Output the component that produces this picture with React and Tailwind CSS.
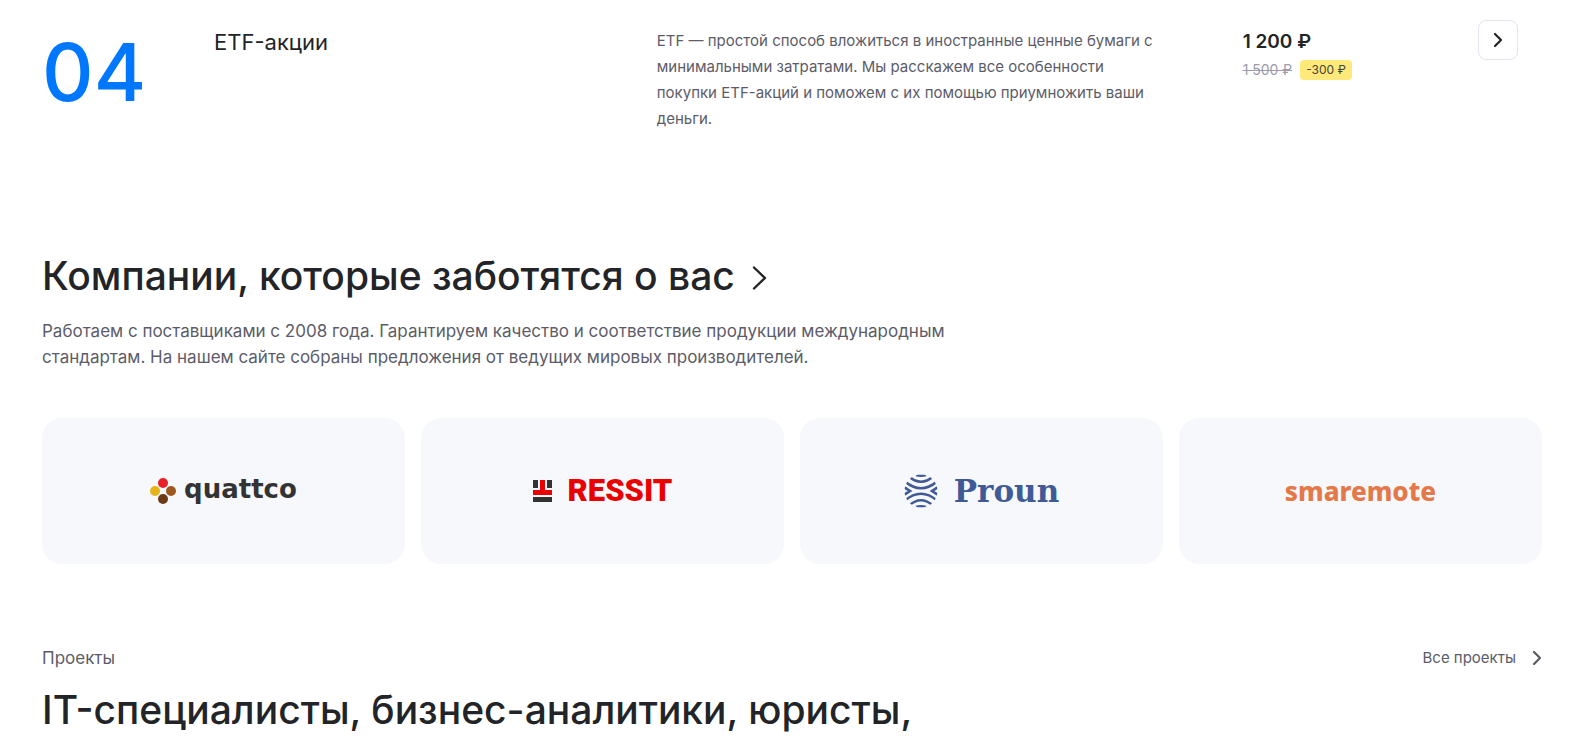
const companies = [
  { name: 'quattco', Logo: QuattcoLogo },
  { name: 'ressit', Logo: RessitLogo },
  { name: 'proun', Logo: ProunLogo },
  { name: 'smaremote', Logo: SmaremoteLogo },
]

function Chevron({ className }) {
  return (
    <svg viewBox="0 0 16 24" className={className} fill="none" stroke="currentColor" strokeWidth="2.4" strokeLinecap="round" strokeLinejoin="round" aria-hidden="true">
      <path d="M3 1.500l11 10.500L3 22.500" />
    </svg>
  )
}

function ArrowIcon({ className }) {
  return (
    <svg viewBox="0 0 10 16" className={className} fill="none" stroke="currentColor" strokeWidth="2.2" strokeLinecap="round" strokeLinejoin="round" aria-hidden="true">
      <path d="M2 2l6 6-6 6" />
    </svg>
  )
}

function QuattcoLogo() {
  return (
    <span className="flex items-center gap-2 text-[#333]">
      <svg viewBox="0 0 26 26" className="size-[26px] shrink-0" aria-hidden="true">
        <circle cx="13" cy="5" r="5" fill="#e62228" />
        <circle cx="5" cy="13" r="5" fill="#e5b41a" />
        <circle cx="21" cy="13" r="5" fill="#9c5820" />
        <circle cx="13" cy="21" r="5" fill="#6b3a16" />
      </svg>
      <span className="pb-1 font-['DejaVu_Sans',sans-serif] text-[26px] leading-8 font-bold">quattco</span>
    </span>
  )
}

function RessitLogo() {
  return (
    <span className="flex items-center gap-4 text-[#eb0000]">
      <svg viewBox="0 0 19 22" className="h-[22px] w-[19px] shrink-0" aria-hidden="true">
        <path d="M0 0h5v8H0zM14 0h5v8h-5zM0 17h19v5H0z" fill="#333" />
        <path d="M7 0h5v10h7v5H0v-5h7z" fill="currentColor" />
      </svg>
      <span className="font-['Roboto',sans-serif] text-[31px] leading-8 font-black">RESSIT</span>
    </span>
  )
}

function ProunLogo() {
  return (
    <span className="flex items-center gap-4 text-[#405a96]">
      <svg viewBox="0 0 34 34" className="size-[34px] shrink-0" fill="none" stroke="currentColor" strokeWidth="2.6" aria-hidden="true">
        <clipPath id="proun-ball">
          <circle cx="17" cy="17" r="16.5" />
        </clipPath>
        <g clipPath="url(#proun-ball)">
          <path d="M12 1q5 1.500 10 0M5 2.500q12 10.500 24 0M1 7.500q16 13.500 32 0" />
          <path d="M12 33q5-1.500 10 0M5 31.500q12-10.500 24 0M1 26.500q16-13.500 32 0" />
          <path d="M-1 12.500l7 4.500-7 4.500M35 12.500l-7 4.500 7 4.500" />
        </g>
      </svg>
      <span className="font-['DejaVu_Serif',serif] text-[31px] leading-8 font-bold">Proun</span>
    </span>
  )
}

function SmaremoteLogo() {
  return <span className="font-['Noto_Sans',sans-serif] text-[26px] leading-8 font-extrabold text-[#e57848]">smaremote</span>
}

function CourseRow() {
  return (
    <article className="flex items-start pt-5 pr-6">
      <div className="w-[172px] shrink-0 pt-3 text-[80px] leading-[80px] font-medium text-[#0077ff]">04</div>
      <h3 className="w-[30%] shrink-0 pt-2 text-[22px] leading-7">ETF-акции</h3>
      <p className="w-[34%] shrink-0 pt-2 text-[15px] leading-[26px] text-[#5c5c68]">
        ETF — простой способ вложиться в иностранные ценные бумаги с минимальными затратами. Мы расскажем все особенности
        покупки ETF-акций и поможем с их помощью приумножить ваши деньги.
      </p>
      <div className="grow pt-2 pl-[84px]">
        <div className="text-[19px] leading-7 font-semibold">1 200 ₽</div>
        <div className="flex items-center gap-2 pt-1">
          <del className="text-sm leading-5 text-[#9c9cac]">1 500 ₽</del>
          <span className="rounded-sm bg-[#ffe97a] px-1.5 text-xs leading-5 text-[#45423a]">-300 ₽</span>
        </div>
      </div>
      <button aria-label="Подробнее" className="flex size-10 shrink-0 items-center justify-center rounded-lg border border-[#e4e4f2]">
        <ArrowIcon className="h-4 w-2.5" />
      </button>
    </article>
  )
}

export default function App() {
  return (
    <main className="bg-white pr-8 pl-[42px] font-['Inter','Liberation_Sans',sans-serif] text-[#222427]">
      <CourseRow />

      <section className="pt-[118px]">
        <h2 className="text-[39px] leading-[52px] font-medium">
          <a href="#companies" className="flex items-center gap-4">
            Компании, которые заботятся о вас
            <Chevron className="mt-1 h-6 w-4" />
          </a>
        </h2>
        <p className="max-w-[960px] pt-4 text-[17px] leading-[26px] text-[#5c5c68]">
          Работаем с поставщиками с 2008 года. Гарантируем качество и соответствие продукции международным стандартам. На
          нашем сайте собраны предложения от ведущих мировых производителей.
        </p>
        <div className="grid grid-cols-4 gap-4 pt-12">
          {companies.map(({ name, Logo }) => (
            <a key={name} href={`#${name}`} className="flex h-[146px] items-center justify-center rounded-[20px] bg-[#f6f8fc]">
              <Logo />
            </a>
          ))}
        </div>
      </section>

      <section className="pt-20">
        <div className="flex items-center justify-between text-[#5c5c68]">
          <span className="text-[17px] leading-7">Проекты</span>
          <a href="#projects" className="flex items-center gap-4 text-[15px] leading-7">
            Все проекты
            <ArrowIcon className="h-4 w-2.5" />
          </a>
        </div>
        <h2 className="max-w-[960px] pt-3 text-[39px] leading-[52px] font-medium">IT-специалисты, бизнес-аналитики, юристы,</h2>
      </section>
    </main>
  )
}
